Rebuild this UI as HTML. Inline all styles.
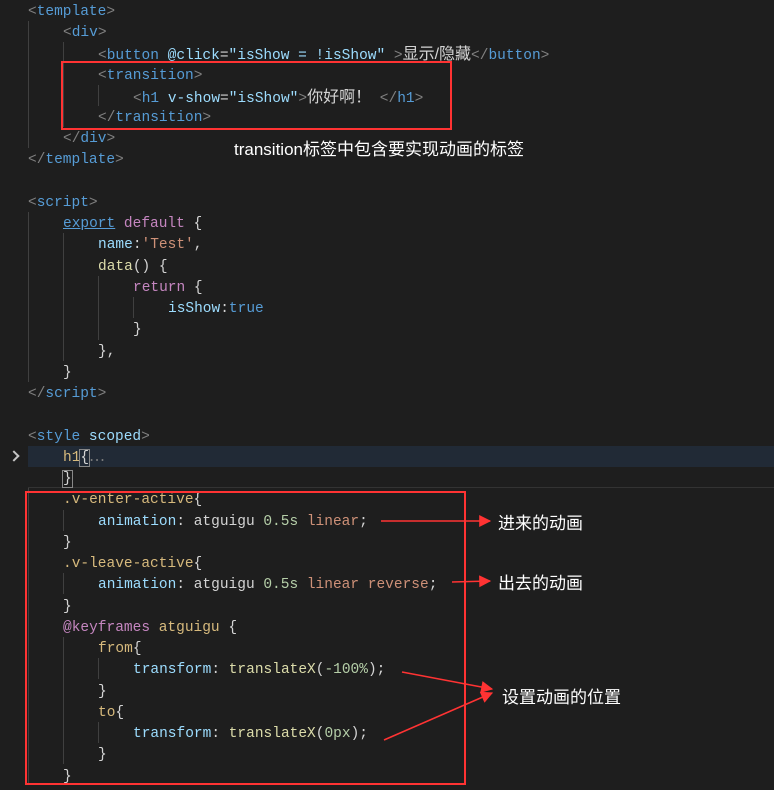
<!DOCTYPE html>
<html><head><meta charset="utf-8">
<style>
html,body{margin:0;padding:0;background:#1e1e1e;width:774px;height:790px;overflow:hidden}
body{position:relative;font-family:"Liberation Mono","Noto Sans CJK SC",monospace;font-size:14.5px;color:#d4d4d4}
.l{position:absolute;left:0;height:21px;line-height:21px;white-space:pre;margin-top:2px}
.g{color:#808080}.t{color:#569cd6}.a{color:#9cdcfe}.s{color:#ce9178}.y{color:#d7ba7d}.n{color:#b5cea8}.p{color:#c586c0}.f{color:#dcdcaa}
.zh{font-family:"Liberation Sans","Noto Sans CJK SC",sans-serif;font-size:16px}
.ig{position:absolute;width:1px;background:#404040}
.box{position:absolute;border:2px solid #ff3333;box-sizing:border-box}
.note{position:absolute;color:#fff;font-family:"Liberation Sans","Noto Sans CJK SC",sans-serif;font-size:17px;white-space:nowrap}
</style></head><body>
<div style="position:absolute;left:28px;right:0;top:446px;height:21px;background:#212a36"></div>
<div style="position:absolute;left:28px;right:0;top:487px;height:1px;background:#333"></div>
<div style="position:absolute;left:10px;top:452px;width:6px;height:6px;border-right:2px solid #c5c5c5;border-top:2px solid #c5c5c5;transform:rotate(45deg)"></div>

<div class="ig" style="left:28px;top:21px;height:127px"></div>
<div class="ig" style="left:63px;top:42px;height:85px"></div>
<div class="ig" style="left:98px;top:85px;height:21px"></div>
<div class="ig" style="left:28px;top:212px;height:170px"></div>
<div class="ig" style="left:63px;top:233px;height:128px"></div>
<div class="ig" style="left:98px;top:276px;height:64px"></div>
<div class="ig" style="left:133px;top:297px;height:21px"></div>
<div class="ig" style="left:28px;top:488px;height:297px"></div>
<div class="ig" style="left:63px;top:510px;height:21px"></div>
<div class="ig" style="left:63px;top:573px;height:21px"></div>
<div class="ig" style="left:63px;top:637px;height:127px"></div>
<div class="ig" style="left:98px;top:658px;height:21px"></div>
<div class="ig" style="left:98px;top:722px;height:21px"></div>

<div class="l" style="top:0px;left:28px"><span class="g">&lt;</span><span class="t">template</span><span class="g">&gt;</span></div>
<div class="l" style="top:21px;left:63px"><span class="g">&lt;</span><span class="t">div</span><span class="g">&gt;</span></div>
<div class="l" style="top:42px;left:98px"><span class="g">&lt;</span><span class="t">button</span> <span class="a">@click</span>=<span class="a">"isShow = !isShow"</span> <span class="g">&gt;</span><span class="zh">显示/隐藏</span><span class="g">&lt;/</span><span class="t">button</span><span class="g">&gt;</span></div>
<div class="l" style="top:64px;left:98px"><span class="g">&lt;</span><span class="t">transition</span><span class="g">&gt;</span></div>
<div class="l" style="top:85px;left:133px"><span class="g">&lt;</span><span class="t">h1</span> <span class="a">v-show</span>=<span class="a">"isShow"</span><span class="g">&gt;</span><span class="zh">你好啊！</span> <span class="g">&lt;/</span><span class="t">h1</span><span class="g">&gt;</span></div>
<div class="l" style="top:106px;left:98px"><span class="g">&lt;/</span><span class="t">transition</span><span class="g">&gt;</span></div>
<div class="l" style="top:127px;left:63px"><span class="g">&lt;/</span><span class="t">div</span><span class="g">&gt;</span></div>
<div class="l" style="top:148px;left:28px"><span class="g">&lt;/</span><span class="t">template</span><span class="g">&gt;</span></div>

<div class="l" style="top:191px;left:28px"><span class="g">&lt;</span><span class="t">script</span><span class="g">&gt;</span></div>
<div class="l" style="top:212px;left:63px"><span class="t" style="text-decoration:underline">export</span> <span class="p">default</span> {</div>
<div class="l" style="top:233px;left:98px"><span class="a">name</span>:<span class="s">'Test'</span>,</div>
<div class="l" style="top:255px;left:98px"><span class="f">data</span>() {</div>
<div class="l" style="top:276px;left:133px"><span class="p">return</span> {</div>
<div class="l" style="top:297px;left:168px"><span class="a">isShow</span>:<span class="t">true</span></div>
<div class="l" style="top:318px;left:133px">}</div>
<div class="l" style="top:340px;left:98px">},</div>
<div class="l" style="top:361px;left:63px">}</div>
<div class="l" style="top:382px;left:28px"><span class="g">&lt;/</span><span class="t">script</span><span class="g">&gt;</span></div>

<div class="l" style="top:425px;left:28px"><span class="g">&lt;</span><span class="t">style</span> <span class="a">scoped</span><span class="g">&gt;</span></div>
<div class="l" style="top:446px;left:63px"><span class="y">h1</span><span style="outline:1px solid #888">{</span><span class="g">⋯</span></div>
<div class="l" style="top:467px;left:63px"><span style="outline:1px solid #888">}</span></div>
<div class="l" style="top:488px;left:63px"><span class="y">.v-enter-active</span>{</div>
<div class="l" style="top:510px;left:98px"><span class="a">animation</span>: atguigu <span class="n">0.5s</span> <span class="s">linear</span>;</div>
<div class="l" style="top:531px;left:63px">}</div>
<div class="l" style="top:552px;left:63px"><span class="y">.v-leave-active</span>{</div>
<div class="l" style="top:573px;left:98px"><span class="a">animation</span>: atguigu <span class="n">0.5s</span> <span class="s">linear reverse</span>;</div>
<div class="l" style="top:595px;left:63px">}</div>
<div class="l" style="top:616px;left:63px"><span class="p">@keyframes</span> <span class="y">atguigu</span> {</div>
<div class="l" style="top:637px;left:98px"><span class="y">from</span>{</div>
<div class="l" style="top:658px;left:133px"><span class="a">transform</span>: <span class="f">translateX</span>(<span class="n">-100%</span>);</div>
<div class="l" style="top:680px;left:98px">}</div>
<div class="l" style="top:701px;left:98px"><span class="y">to</span>{</div>
<div class="l" style="top:722px;left:133px"><span class="a">transform</span>: <span class="f">translateX</span>(<span class="n">0px</span>);</div>
<div class="l" style="top:743px;left:98px">}</div>
<div class="l" style="top:765px;left:63px">}</div>

<div class="box" style="left:61px;top:61px;width:391px;height:69px"></div>
<div class="box" style="left:25px;top:491px;width:441px;height:294px"></div>

<div class="note" style="left:234px;top:135px">transition标签中包含要实现动画的标签</div>
<div class="note" style="left:498px;top:509px">进来的动画</div>
<div class="note" style="left:498px;top:569px">出去的动画</div>
<div class="note" style="left:502px;top:683px">设置动画的位置</div>

<svg style="position:absolute;left:0;top:0" width="774" height="790">
<defs><marker id="ar2" viewBox="0 0 10 10" markerWidth="16" markerHeight="12" refX="9" refY="5" orient="auto" markerUnits="userSpaceOnUse"><path d="M0,0 L10,5 L0,10 Z" fill="#ff3333"/></marker></defs>
<path d="M381,521 L490,521" stroke="#ff3333" stroke-width="1.5" marker-end="url(#ar2)"/>
<path d="M452,582 L490,581" stroke="#ff3333" stroke-width="1.5" marker-end="url(#ar2)"/>
<path d="M402,672 L492,689" stroke="#ff3333" stroke-width="1.5" marker-end="url(#ar2)"/>
<path d="M384,740 L492,693" stroke="#ff3333" stroke-width="1.5" marker-end="url(#ar2)"/>
</svg>
</body></html>
